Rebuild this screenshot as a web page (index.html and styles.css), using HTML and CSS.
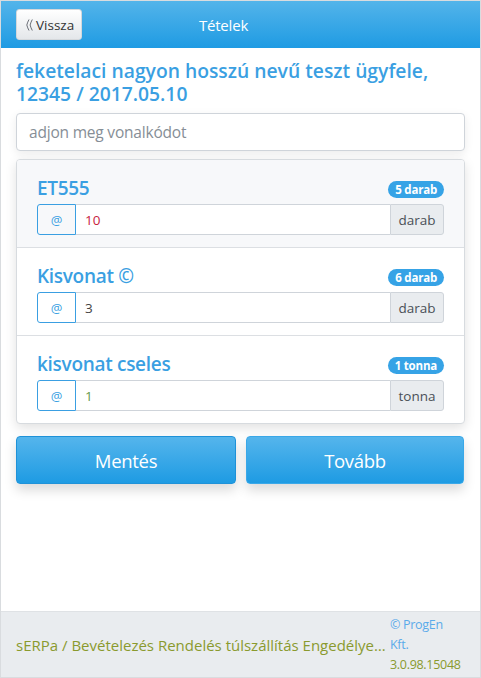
FILE: index.html
```html
<!DOCTYPE html>
<html lang="hu">
<head>
<meta charset="utf-8">
<title>Tételek</title>
<link rel="stylesheet" href="styles.css">
</head>
<body>
<div class="app">
  <header class="topbar">
    <button class="back-btn"><svg class="back-ico" width="7" height="12" viewBox="0 0 7 12"><path d="M3 0.5 Q1.6 3 0.8 6 Q1.6 9 3 11.5 M6.3 0.5 Q4.9 3 4.1 6 Q4.9 9 6.3 11.5" fill="none" stroke="#5b6068" stroke-width="0.9"/></svg>Vissza</button>
    <div class="topbar-title">Tételek</div>
  </header>
  <main class="content">
    <h1 class="customer">feketelaci nagyon hosszú nevű teszt ügyfele, 12345 / 2017.05.10</h1>
    <input class="barcode" type="text" placeholder="adjon meg vonalkódot">
    <div class="list">
      <div class="item item-active">
        <div class="item-head">
          <span class="item-name">ET555</span>
          <span class="badge">5 darab</span>
        </div>
        <div class="input-group">
          <span class="addon-left">@</span>
          <span class="qty qty-red">10</span>
          <span class="addon-right">darab</span>
        </div>
      </div>
      <div class="item">
        <div class="item-head">
          <span class="item-name">Kisvonat ©</span>
          <span class="badge">6 darab</span>
        </div>
        <div class="input-group">
          <span class="addon-left">@</span>
          <span class="qty">3</span>
          <span class="addon-right">darab</span>
        </div>
      </div>
      <div class="item">
        <div class="item-head">
          <span class="item-name">kisvonat cseles</span>
          <span class="badge">1 tonna</span>
        </div>
        <div class="input-group">
          <span class="addon-left">@</span>
          <span class="qty qty-green">1</span>
          <span class="addon-right">tonna</span>
        </div>
      </div>
    </div>
    <div class="actions">
      <button class="btn-main">Mentés</button>
      <button class="btn-main">Tovább</button>
    </div>
  </main>
  <footer class="footer">
    <div class="footer-path">sERPa / Bevételezés Rendelés túlszállítás Engedélyezés</div>
    <div class="footer-info">
      <div class="copy">© ProgEn Kft.</div>
      <div class="version">3.0.98.15048</div>
    </div>
  </footer>
</div>
</body>
</html>
```
FILE: styles.css
```css
* { box-sizing: border-box; }
html, body { margin: 0; padding: 0; }
body {
  font-family: "Open Sans", "Noto Sans", "Liberation Sans", sans-serif;
  background: #fff;
}
.app {
  width: 481px;
  height: 678px;
  border: 1px solid #d9dcdf;
  display: flex;
  flex-direction: column;
  background: #fff;
}
.topbar {
  height: 47px;
  background: linear-gradient(#53b4ea, #1f9be3);
  display: flex;
  align-items: center;
  padding: 0 15px;
  position: relative;
  flex: none;
}
.back-btn {
  height: 31px;
  width: 66px;
  border: 1px solid #d5d8db;
  border-radius: 3px;
  background: linear-gradient(#ffffff, #e4e7ea);
  font-family: inherit;
  font-size: 13.5px;
  color: #333;
  padding: 0 0 0 9px;
  display: flex;
  align-items: center;
  position: relative;
  z-index: 1;
}
.back-ico { margin-right: 3px; flex: none; }
.topbar-title {
  position: absolute;
  left: 0; right: 34px;
  text-align: center;
  color: #fff;
  font-size: 15px;
  letter-spacing: -0.2px;
}
.content {
  padding: 0 15px;
  display: flex;
  flex-direction: column;
}
.customer {
  margin: 11px 0 0 0;
  font-size: 19.3px;
  line-height: 23px;
  font-weight: 600;
  color: #3a9fe2;
}
.barcode {
  margin-top: 8px;
  height: 38px;
  width: 100%;
  border: 1px solid #cfd4da;
  border-radius: 4px;
  padding: 0 12px;
  font-family: inherit;
  font-size: 15.5px;
  color: #555;
  box-shadow: 0 3px 10px rgba(0,0,0,0.08);
  letter-spacing: -0.2px;
}
.barcode::placeholder { color: #868e96; }
.list {
  margin-top: 8px;
  border: 1px solid #d7dbdf;
  border-radius: 4px;
  box-shadow: 0 4px 12px rgba(0,0,0,0.12);
  overflow: hidden;
  background: #fff;
}
.item {
  padding: 12px 20px 12px 20px;
  border-top: 1px solid #dcdfe3;
  height: 88px;
}
.item:first-child { border-top: none; height: 87px; }
.item-active { background: #f7f8fa; }
.item-head {
  display: flex;
  justify-content: space-between;
  align-items: flex-end;
  height: 30px;
}
.item-name {
  font-size: 19px;
  font-weight: 600;
  color: #3a9fe2;
  line-height: 28px;
  letter-spacing: -0.3px;
}
.badge {
  background: #36a3e6;
  color: #fff;
  font-size: 11.5px;
  font-weight: 700;
  border-radius: 9px;
  padding: 0 7px;
  height: 17px;
  line-height: 17px;
  margin-bottom: 4px;
  letter-spacing: -0.2px;
}
.input-group {
  margin-top: 2px;
  display: flex;
  height: 31px;
}
.addon-left {
  width: 39px;
  border: 1px solid #3a9fe2;
  border-radius: 3px 0 0 3px;
  display: flex;
  align-items: center;
  justify-content: center;
  color: #3a9fe2;
  font-size: 13px;
}
.qty {
  flex: 1;
  border-top: 1px solid #cfd4da;
  border-bottom: 1px solid #cfd4da;
  background: #fff;
  display: flex;
  align-items: center;
  padding-left: 9px;
  font-size: 13.5px;
  color: #444;
}
.qty-red { color: #c8233e; }
.qty-green { color: #66994a; }
.addon-right {
  width: 54px;
  border: 1px solid #cfd4da;
  border-radius: 0 3px 3px 0;
  background: #e9ecef;
  display: flex;
  align-items: center;
  justify-content: center;
  font-size: 13.5px;
  color: #495057;
}
.actions {
  margin-top: 12px;
  display: grid;
  grid-template-columns: 220px 218px;
  column-gap: 10px;
}
.btn-main {
  height: 48px;
  border: 1px solid #1f92d8;
  border-radius: 4px;
  background: linear-gradient(#55b5ec, #1e9be3);
  color: #fff;
  font-family: inherit;
  font-size: 18.5px;
  box-shadow: 0 6px 12px rgba(0,0,0,0.15);
  letter-spacing: -0.3px;
}
.btn-main + .btn-main { border-color: #3aa8e8; }
.footer {
  margin-top: auto;
  height: 66px;
  background: #e9ecef;
  border-top: 1px solid #dfe2e5;
  display: flex;
  align-items: center;
  padding: 0 15px;
  flex: none;
}
.footer-path {
  width: 374px;
  white-space: nowrap;
  overflow: hidden;
  text-overflow: ellipsis;
  color: #8a9a2e;
  font-size: 15px;
  margin-top: 1px;
}
.footer-info {
  width: 60px;
  font-size: 12.5px;
  line-height: 20px;
  letter-spacing: -0.3px;
}
.copy { color: #5aaaea; }
.version { color: #8a9a2e; }
```
